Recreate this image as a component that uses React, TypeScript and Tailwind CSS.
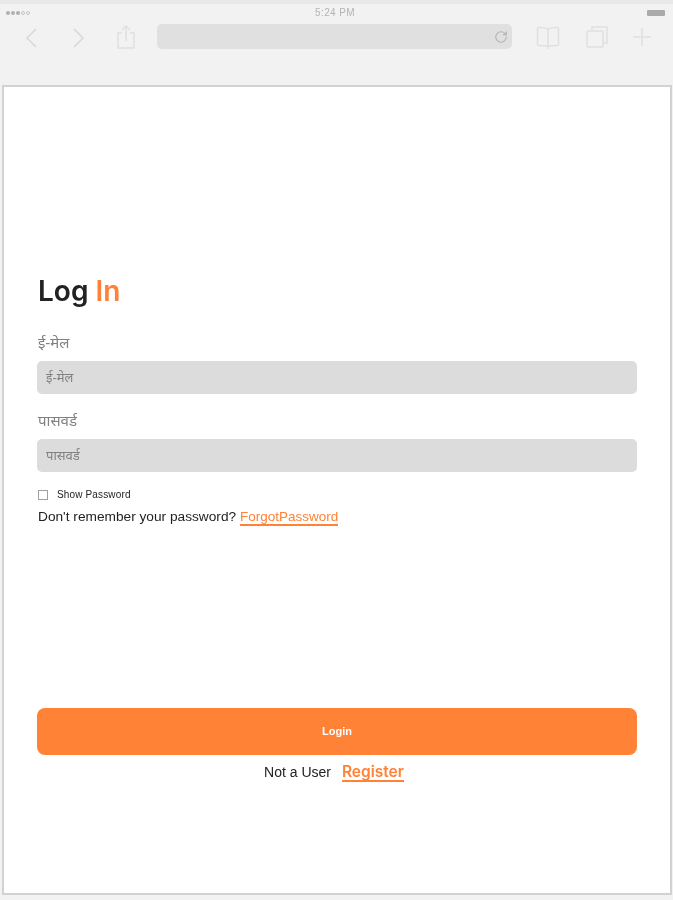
import { RotateCw } from 'lucide-react'

function StatusBar() {
  return (
    <div className="flex h-[17px] items-center pl-[6px] pr-[8px] text-[#b4b4b4]">
      <div className="flex w-[309px] items-center gap-[1px]">
        <span className="h-[4px] w-[4px] rounded-full bg-[#b0b0b0]" />
        <span className="h-[4px] w-[4px] rounded-full bg-[#b0b0b0]" />
        <span className="h-[4px] w-[4px] rounded-full bg-[#b0b0b0]" />
        <span className="h-[4px] w-[4px] rounded-full border border-[#c4c4c4]" />
        <span className="h-[4px] w-[4px] rounded-full border border-[#c4c4c4]" />
      </div>
      <span className="text-[10px] leading-none tracking-[0.4px]">5:24 PM</span>
      <div className="ml-auto h-[6px] w-[18px] rounded-[1px] bg-[#aaaaaa]" />
    </div>
  )
}

function Toolbar() {
  return (
    <div className="flex h-[64px] items-start pl-[24px] pr-[18px] pt-[3px] text-[#e0e0e0]">
      {/* back */}
      <svg className="mt-[4px] text-[#d8d8d8]" width="15" height="20" viewBox="0 0 15 20" fill="none" stroke="currentColor" strokeWidth="1.5">
        <path d="M12 1 3 10l9 9" />
      </svg>
      {/* forward */}
      <svg className="ml-[32px] mt-[4px] text-[#d8d8d8]" width="15" height="20" viewBox="0 0 15 20" fill="none" stroke="currentColor" strokeWidth="1.5">
        <path d="m3 1 9 9-9 9" />
      </svg>
      {/* share */}
      <svg className="ml-[29px]" width="22" height="26" viewBox="0 0 22 26" fill="none" stroke="currentColor" strokeWidth="1.5">
        <path d="M7 9H3v15h16V9h-4M11 17V2M7 6l4-4 4 4" />
      </svg>
      <div className="ml-[20px] flex h-[25px] w-[355px] items-center justify-end rounded-[5px] bg-[#e0e0e0] pr-[4px]">
        <RotateCw className="h-[14px] w-[14px] text-[#b4b4b4]" strokeWidth={2} />
      </div>
      {/* bookmarks */}
      <svg className="ml-[23px]" width="26" height="26" viewBox="0 0 26 26" fill="none" stroke="currentColor" strokeWidth="1.5">
        <path d="M13 5c-2-1-4-1.500-9-1.500a1.500 1.500 0 0 0-1.500 1.500v15A1.500 1.500 0 0 0 4 21.500c5 0 7 0 9 1 2-1 4-1 9-1a1.500 1.500 0 0 0 1.500-1.500V5A1.500 1.500 0 0 0 22 3.500c-5 0-7 .5-9 1.500Zm0 0v20" />
      </svg>
      {/* tabs */}
      <svg className="ml-[24px]" width="24" height="25" viewBox="0 0 24 25" fill="none" stroke="currentColor" strokeWidth="1.5">
        <path d="M7 7V3h15v16h-4" />
        <rect x="2" y="7" width="16" height="16" rx="1" />
      </svg>
      <svg className="ml-[23px] mt-[3px]" width="20" height="20" viewBox="0 0 20 20" fill="none" stroke="currentColor" strokeWidth="1.5">
        <path d="M10 1v18M1 10h18" />
      </svg>
    </div>
  )
}

function Field({ label }: { label: string }) {
  return (
    <div>
      <label className="block h-[24px] pl-[1px] text-[15px] leading-[23px] text-[#808080]">{label}</label>
      <div className="mt-[6px] flex h-[33px] items-center rounded-[5px] bg-[#dcdcdc] px-[9px] text-[13px] text-[#808080]">
        {label}
      </div>
    </div>
  )
}

export default function App() {
  return (
    <div className="h-[900px] w-[673px] overflow-hidden border-t-[4px] border-[#e9e9e9] bg-[#f2f2f2] font-['Liberation_Sans','Noto_Sans',sans-serif] blur-[0.5px]">
      <StatusBar />
      <Toolbar />
      <div className="ml-[2px] flex h-[810px] w-[670px] flex-col border-2 border-[#d2d2d2] bg-white pl-[33px] pr-[33px]">
        <h1 className="mt-[186px] pl-[1px] font-['Inter',sans-serif] text-[28px] font-semibold leading-[36px] text-[#222222]">
          Log <span className="text-[#ff8236]">In</span>
        </h1>
        <div className="mt-[22px] flex flex-col gap-[15px]">
          <Field label="ई-मेल" />
          <Field label="पासवर्ड" />
        </div>
        <div className="mt-[17px] flex h-[11px] items-center pl-[1px]">
          <span className="h-[10px] w-[10px] border border-[#a0a0a0] bg-white" />
          <span className="ml-[9px] text-[10px] leading-none tracking-[0.15px] text-[#222222]">Show Password</span>
        </div>
        <p className="mt-[8px] pl-[1px] text-[13.7px] leading-[18px] text-[#222222]">
          Don't remember your password?{' '}
          <a className="border-b-2 border-[#ff8236] text-[13.5px] text-[#ff8236]">ForgotPassword</a>
        </p>
        <button className="mt-[182px] h-[47px] w-full rounded-[8px] bg-[#ff8236] text-[11px] font-bold text-white">
          Login
        </button>
        <div className="mt-[7px] flex items-center justify-center gap-[11px] pr-[6px]">
          <span className="text-[14px] text-[#222222]">Not a User</span>
          <a className="border-b-2 border-[#ff8236] font-['Inter',sans-serif] text-[15.5px] font-semibold leading-[17px] text-[#ff8236]">
            Register
          </a>
        </div>
      </div>
    </div>
  )
}
